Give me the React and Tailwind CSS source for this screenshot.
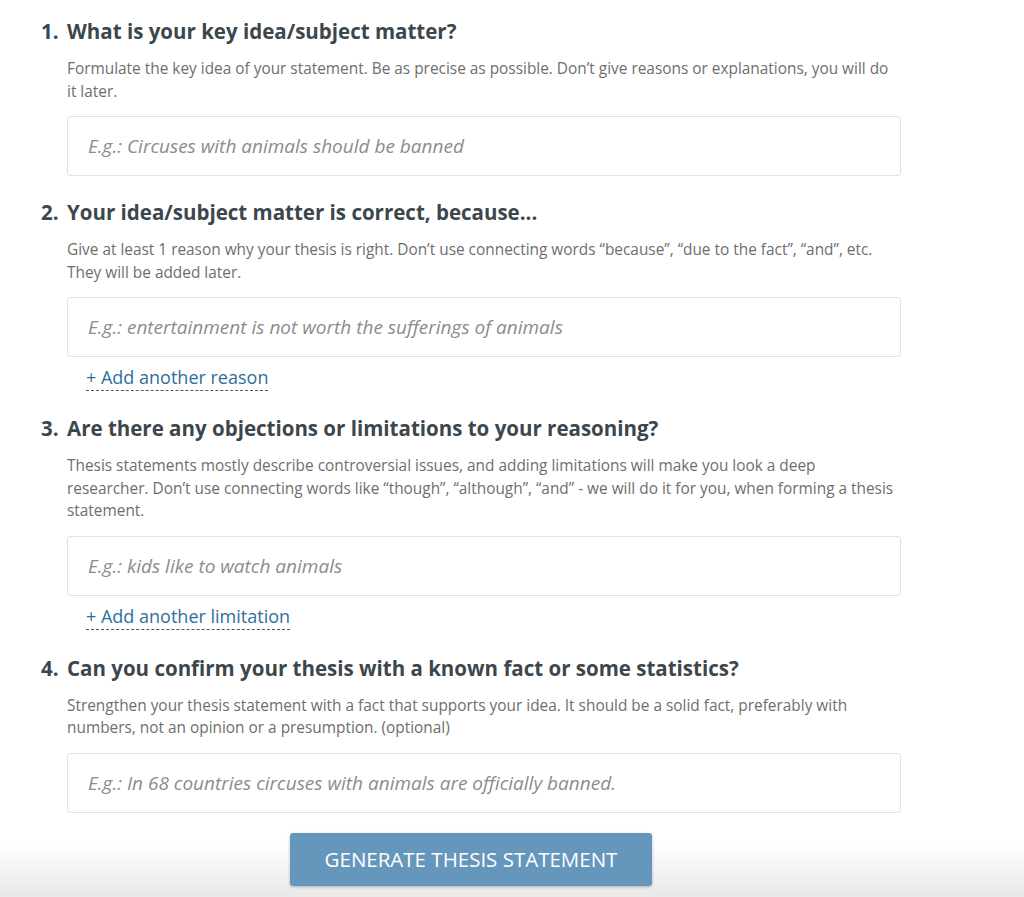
import React from 'react';

const font = { fontFamily: '"Open Sans", "Noto Sans", Arial, sans-serif' };

const Section = ({ num, title, text, placeholder, link }) => (
    <div className="flex">
        <div className="w-[26px] shrink-0 text-[20.5px] leading-[28px] font-bold text-[#3c464d]">{num}.</div>
        <div className="w-[834px]">
            <h2 className="text-[20.5px] leading-[28px] font-bold text-[#3c464d]">{title}</h2>
            <p className="mt-[13px] text-[15.4px] leading-[22.5px] text-[#6e6e6e]">{text}</p>
            <input
                type="text"
                placeholder={placeholder}
                className="mt-[13px] block h-[60px] w-full rounded-[3px] border border-[#e2e2e2] bg-white px-[20px] text-[19px] text-[#444] outline-none placeholder:italic placeholder:text-[#8c8c8c]"
            />
            {link && (
                <div className="mt-[8px] pl-[19px]">
                    <button className="border-b border-dashed border-[#555] text-[18px] leading-[25px] text-[#2f6f9c]">
                        + {link}
                    </button>
                </div>
            )}
        </div>
    </div>
);

export default function App() {
    return (
        <div style={font} className="flex h-[897px] w-[1024px] flex-col overflow-hidden bg-white">
            <div className="pl-[41px] pt-[17px]">
                <Section
                    num="1"
                    title="What is your key idea/subject matter?"
                    text="Formulate the key idea of your statement. Be as precise as possible. Don’t give reasons or explanations, you will do it later."
                    placeholder="E.g.: Circuses with animals should be banned"
                />
                <div className="h-[22px]" />
                <Section
                    num="2"
                    title="Your idea/subject matter is correct, because..."
                    text="Give at least 1 reason why your thesis is right. Don’t use connecting words “because”, “due to the fact”, “and”, etc. They will be added later."
                    placeholder="E.g.: entertainment is not worth the sufferings of animals"
                    link="Add another reason"
                />
                <div className="h-[23px]" />
                <Section
                    num="3"
                    title="Are there any objections or limitations to your reasoning?"
                    text="Thesis statements mostly describe controversial issues, and adding limitations will make you look a deep researcher. Don’t use connecting words like “though”, “although”, “and” - we will do it for you, when forming a thesis statement."
                    placeholder="E.g.: kids like to watch animals"
                    link="Add another limitation"
                />
                <div className="h-[24px]" />
                <Section
                    num="4"
                    title="Can you confirm your thesis with a known fact or some statistics?"
                    text="Strengthen your thesis statement with a fact that supports your idea. It should be a solid fact, preferably with numbers, not an opinion or a presumption. (optional)"
                    placeholder="E.g.: In 68 countries circuses with animals are officially banned."
                />
            </div>
            <div className="flex-1 bg-linear-to-b from-white from-35% to-[#e8e8e8] pt-[20px]">
                <div className="flex w-[901px] justify-center pl-[41px]">
                    <button className="h-[53px] w-[362px] rounded-[3px] bg-[#6597bc] text-[20.5px] text-white uppercase shadow-[0_1px_3px_rgba(0,0,0,0.25)]">
                        Generate Thesis Statement
                    </button>
                </div>
            </div>
        </div>
    );
}
